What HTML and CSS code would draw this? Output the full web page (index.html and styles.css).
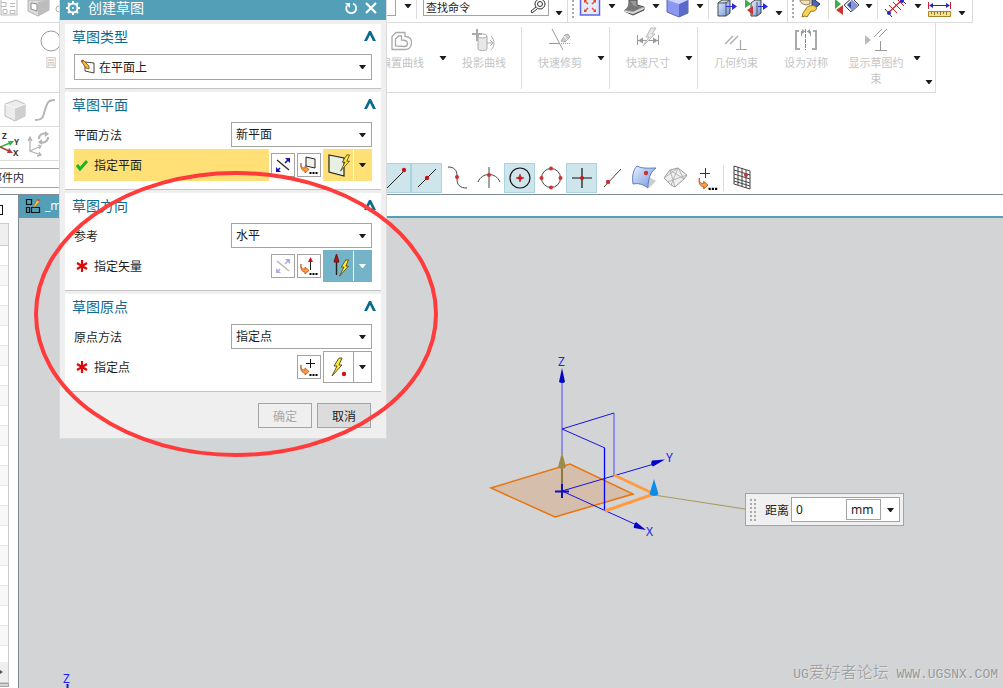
FILE: index.html
```html
<!DOCTYPE html>
<html lang="zh-CN">
<head>
    <meta charset="UTF-8">
    <meta name="viewport" content="width=device-width, initial-scale=1.0">
    <title>创建草图</title>
    <link rel="stylesheet" href="styles.css">
</head>
<body>
    <svg class="defs">
        <linearGradient id="blue" x1="0" y1="0" x2="1" y2="1"><stop offset="0" stop-color="#e8f0ff"/><stop offset="1" stop-color="#6c93dc"/></linearGradient>
        <symbol id="drop" viewBox="0 0 7 4"><path d="M0 0h7L4 4H3z" fill="currentColor"/></symbol>
        <symbol id="chevron" viewBox="0 0 12 10"><path d="M0 10 5 0h2l5 10H9L6 4 3 10z" fill="#0a6a8a"/></symbol>
        <symbol id="bolt" viewBox="0 0 12 20"><path d="M8 1 3 9h3L1 19 11 8H8l3-7z" fill="#ffe92e" stroke="#4c4420" stroke-width=".9"/></symbol>
        <symbol id="hook" viewBox="0 0 18 12"><path d="M1 1c0 4 1 5 4 5V4l4 3.500L5 11V9C2 9 0 6 1 1z" fill="#ff9c3c" stroke="#b8501c" stroke-width=".8"/><path d="M9.500 10h2v2h-2zM12.500 10h2v2h-2zM15.500 10h2v2h-2z" fill="#000"/></symbol>
        <symbol id="star" viewBox="0 0 12 12"><path d="M6 0v12M1 3l10 6M11 3 1 9" stroke="#dc0808" stroke-width="2.200"/></symbol>
        <symbol id="flip" viewBox="0 0 18 18"><path d="M3 4l12 10" stroke="#222" stroke-width="1.200"/><path d="M11 7l4-4M6 12l-3 3" stroke="#1414b4" stroke-width="1.600"/><path d="M16 2v5l-5-5zM2 16v-5l5 5z" fill="#1414b4"/></symbol>
    </svg>

    <header class="topbar">
        <div class="left-tools">
            <svg class="icon" viewBox="0 0 24 22"><path d="M1 0v15h16V0M1 2.500h5v4H1M3 9.500h4v4H3zM10 3.500h5M10 6.500h5M10 10.500h5v3h-5z" fill="none" stroke="#b8b8b8"/></svg>
            <svg class="icon" viewBox="0 0 24 22"><path d="M1 0v11l10 5 11-6V0z" fill="#dcdcdc" stroke="#b0b0b0"/><path d="M11 2v14l11-6V0z" fill="#bdbdbd"/><path d="M4 3l6 1v7l-6-2z" fill="#fff" stroke="#888"/></svg>
            <svg class="icon" viewBox="0 0 24 22"><circle cx="5" cy="9" r="3" fill="none" stroke="#aaa"/></svg>
        </div>
        <div class="box-end"></div>
        <svg class="arrow"><use href="#drop"/></svg>
        <span class="sep"></span>
        <label class="search">
            <input type="text" value="查找命令" aria-label="查找命令">
            <svg viewBox="0 0 16 14"><circle cx="10" cy="4" r="5" fill="none" stroke="#333"/><circle cx="10" cy="4" r="2.500" fill="none" stroke="#333"/><path d="M6 7l-5 4 1 2 5-4" fill="#fff" stroke="#333"/></svg>
        </label>
        <svg class="arrow low"><use href="#drop"/></svg>
        <span class="sep edge"></span>
        <span class="grip"></span>
        <svg class="icon" viewBox="0 0 24 22"><path d="M2.500-2v17h19V-2z" fill="#e4eafc" stroke="#5a64e6" stroke-width="1.500"/><path d="M10 4 7 1M14 4l3-3M10 8l-3 3M14 8l3 3" stroke="#e84820" stroke-width="1.400"/><path d="M6 0h3L6 3zM18 0h-3l3 3zM6 12h3L6 9zM18 12h-3l3-3z" fill="#e84820"/></svg>
        <svg class="arrow"><use href="#drop"/></svg>
        <svg class="icon" viewBox="0 0 24 22"><path d="M7 0v7l-5 4 9 4 11-5v-3l-7-2V0z" fill="#999" stroke="#444"/><path d="M2 11l9 2 11-5" fill="none" stroke="#ddd" stroke-width="1.500"/><path d="M8 1l4 5 8 1-8 4-8-1z" fill="#777"/></svg>
        <svg class="arrow"><use href="#drop"/></svg>
        <svg class="icon" viewBox="0 0 24 22"><path d="M1 0v12l12 5 9-4V0z" fill="#8c98f0" stroke="#5a66bc"/><path d="M13 4v13l9-4V0z" fill="#5a6ac8"/><path d="M1 0h21l-9 4z" fill="#cdd3ff"/></svg>
        <svg class="arrow"><use href="#drop"/></svg>
        <span class="sep"></span>
        <svg class="icon" viewBox="0 0 24 22"><path d="M3 3l4-3h8v13l-4 3H3z" fill="url(#blue)" stroke="#444"/><path d="M11 2v14M3 3h8l4-3" fill="none" stroke="#555"/><path d="M11 6.500h8" stroke="#2a2ad8"/><path d="M17 3l5 3.500-5 3.500z" fill="#2a2ad8"/></svg>
        <svg class="icon spaced" viewBox="0 0 24 22"><path d="M6 3l4-3h6v13l-4 3H6z" fill="url(#blue)" stroke="#444"/><path d="M12 2v14" stroke="#555"/><path d="M13 6.500h7" stroke="#2a2ad8"/><path d="M18 3l5 3.500-5 3.500z" fill="#2a2ad8"/><path d="M0-1l6 5-6 4z" fill="#38b048"/><path d="M8 6v9l-6-5z" fill="#c43a32"/></svg>
        <svg class="arrow low"><use href="#drop"/></svg>
        <span class="sep edge"></span>
        <span class="grip"></span>
        <svg class="icon" viewBox="0 0 24 22"><path d="M14-2l8 6-8 7z" fill="#4a66b8" stroke="#333"/><path d="M2 0c0 4 6 6 10 4V0z" fill="#f3dfb2" stroke="#8c7850"/><path d="M8 9c0-3 8-5 10-2 2 3-3 5-5 4l-4 6-2-1-3 1 1-4z" fill="#f6d255" stroke="#94721c"/></svg>
        <span class="sep mid"></span>
        <svg class="icon" viewBox="0 0 24 22"><path d="M0-1l6 5-6 5z" fill="#38b048"/><path d="M8 5v10l-7-5z" fill="#c43a32"/><path d="M9 5l8-7 7 7-8 7z" fill="#eef" stroke="#444"/><path d="M16-1v13l7-7z" fill="#8a94d8"/><path d="M12 5l4-4v8z" fill="#3c50a0"/></svg>
        <svg class="arrow"><use href="#drop"/></svg>
        <span class="sep"></span>
        <svg class="icon" viewBox="0 0 24 22"><path d="M4 13 18 0" stroke="#d02020" stroke-width="1.200"/><path d="M5 5l8 8M9 2l8 8M13-1l7 7" stroke="#d02020"/><path d="M1 9l7 8M16-2l6 6" stroke="#333"/><circle cx="5" cy="13" r="2" fill="#2828d0"/><circle cx="18" cy="1" r="2" fill="#2828d0"/></svg>
        <svg class="arrow"><use href="#drop"/></svg>
        <svg class="icon" viewBox="0 0 24 22"><path d="M.5 2v7M22.500 2v7" stroke="#c41e3a"/><path d="M2 5.500h19" stroke="#2828b0"/><path d="M1 5.500l4-2.500v5zM22 5.500l-4-2.500v5z" fill="#2828b0"/><path d="M.5 11.500h22v5H.5z" fill="#f8e38a" stroke="#a88428"/><path d="M3.500 12v2M6.500 12v3M9.500 12v2M12.500 12v3M15.500 12v2M18.500 12v3" stroke="#8b7538"/></svg>
        <svg class="arrow low"><use href="#drop"/></svg>
    </header>

    <section class="ribbon">
        <div class="ribbon-left">
            <button class="tool">
                <svg viewBox="0 0 28 28"><circle cx="14" cy="14" r="10" fill="none" stroke="#999"/></svg>
                圆
            </button>
        </div>
        <div class="group">
            <button class="tool">
                <svg viewBox="0 0 28 28"><path d="M4 22.500V9.500l4-4h9v4c5 0 7 3 6.500 7s-3 6-6 6z" fill="none" stroke="#aaa" stroke-width="1.300"/><path d="M7.500 19v-7l3-3h3v4c4 0 6 1 6 3.500s-1 3-3 3z" fill="none" stroke="#aaa" stroke-width="1.300"/></svg>
                偏置曲线
            </button>
            <svg class="arrow"><use href="#drop"/></svg>
            <button class="tool">
                <svg viewBox="0 0 28 28"><path d="M7 2v12M2 7h10" stroke="#aaa" stroke-width="2"/><path d="M8 9v13c0 2 9 2 9 0V9z" fill="#e8e8e8" stroke="#aaa"/><ellipse cx="12.500" cy="9" rx="4.500" ry="2" fill="#fff" stroke="#aaa"/><path d="M17 16h5M20 13l3 3-3 3M21 9c4 4 4 10 0 14" fill="none" stroke="#aaa"/></svg>
                投影曲线
            </button>
        </div>
        <div class="group">
            <button class="tool">
                <svg viewBox="0 0 28 28"><path d="M6 2l11 21M3 16.500h10" stroke="#999"/><path d="M13 16.500h12" stroke="#999" stroke-dasharray="1 1"/><path d="M15 14l4-6 3-1 2 3-5 5z" fill="#ccc" stroke="#aaa"/><path d="M18 9l3 4" stroke="#fff"/></svg>
                快速修剪
            </button>
            <svg class="arrow"><use href="#drop"/></svg>
        </div>
        <div class="group">
            <button class="tool">
                <svg viewBox="0 0 28 28"><path d="M3.500 8v10M24.500 8v10M4 13.500h20" stroke="#999"/><path d="M4 13.500l5-3v6zM24 13.500l-5-3v6z" fill="#999"/><path d="M17 1l-5 9h3L9 19 21 7h-3l4-6z" fill="#e6e6e6" stroke="#bbb"/></svg>
                快速尺寸
            </button>
            <svg class="arrow"><use href="#drop"/></svg>
        </div>
        <div class="group last">
            <button class="tool">
                <svg viewBox="0 0 28 28"><path d="M3 17l8-8M8 17l8-8M18.500 13v9M14 22.500h11" fill="none" stroke="#aaa" stroke-width="1.200"/></svg>
                几何约束
            </button>
            <button class="tool">
                <svg viewBox="0 0 28 28"><path d="M7 4H4v18h4M21 4h3v18h-4" fill="none" stroke="#aaa" stroke-width="2"/><path d="M13.500 2v21" stroke="#888" stroke-dasharray="4 1"/><path d="M9.500 9V4.500h3M18.500 9V4.500h-3" fill="none" stroke="#999"/><path d="M10 2l3 2.500-3 2.500M18 2l-3 2.500 3 2.500" fill="#999"/></svg>
                设为对称
            </button>
            <button class="tool">
                <svg viewBox="0 0 28 28"><path d="M3 8v10l6-5z" fill="#bbb"/><path d="M12 10l8-8M17 10l8-8M18.500 14v9M13 23.500h12" fill="none" stroke="#999"/></svg>
                显示草图约束
            </button>
            <svg class="arrow"><use href="#drop"/></svg>
        </div>
        <svg class="arrow overflow"><use href="#drop"/></svg>
    </section>

    <div class="side-bar">
        <svg viewBox="0 0 24 24"><path d="M2 6l11-4 9 4v12l-10 5-10-5z" fill="#ececec" stroke="#bbb"/><path d="M12 10v13l10-5V6z" fill="#cfcfcf"/><path d="M2 6l10 4 10-4" fill="none" stroke="#fafafa"/></svg>
        <svg viewBox="0 0 24 24"><path d="M2 22c9 0 8-4 10-10S14 2 22 2" fill="none" stroke="#b4b4b4" stroke-width="2"/></svg>
    </div>
    <div class="side-bar csys">
        <svg viewBox="0 0 24 28"><path d="M0 17l10-4" stroke="#38b048" stroke-width="1.500"/><path d="M8 11h6l-4 5z" fill="#38b048"/><path d="M0 17l9 4" stroke="#b83a3a" stroke-width="1.500"/><path d="M13 23H7l2-5z" fill="#b83a3a"/><text x="2" y="9" class="axis-small">Z</text><text x="14" y="15" class="axis-small">Y</text><text x="13" y="26" class="axis-small">X</text></svg>
        <svg viewBox="0 0 24 28"><path d="M3 8v13l11 4M3 21l11-5M1 11l2-4 2 4M11 15l3 1-2 3M10 26l4-1-2-3" fill="none" stroke="#b4b4b4" stroke-width="1.300"/><path d="M12 9a5 5 0 0 1 7-5M21 7a5 5 0 0 1-7 5" fill="none" stroke="#b4b4b4" stroke-width="2"/><path d="M18 1l4 3-4 3zM15 9v6l-4-3z" fill="#b4b4b4"/></svg>
    </div>

    <div class="snapbar">
        <div class="snap-left">
            <select class="scope" aria-label="选择范围"><option>部件内</option></select>
        </div>
        <button class="snap on" aria-label="端点"><svg viewBox="0 0 28 28"><path d="M5 24 21 8" stroke="#222"/><circle cx="22" cy="6" r="2.200" fill="#d01414"/></svg></button>
        <button class="snap on" aria-label="中点"><svg viewBox="0 0 28 28"><path d="M5 23 23 5" stroke="#222"/><circle cx="14" cy="14" r="2.200" fill="#d01414"/></svg></button>
        <button class="snap" aria-label="控制点"><svg viewBox="0 0 28 28"><path d="M4 3c6 0 9 3 9 9v3c0 6 3 9 10 9" fill="none" stroke="#444"/><circle cx="13" cy="13" r="2" fill="#d03030"/></svg></button>
        <button class="snap" aria-label="交点"><svg viewBox="0 0 28 28"><path d="M14 3v21M3 18c4-10 18-10 22 0" fill="none" stroke="#444"/><circle cx="14" cy="11" r="2" fill="#d03030"/></svg></button>
        <button class="snap on" aria-label="圆弧中心"><svg viewBox="0 0 28 28"><circle cx="14" cy="14" r="10" fill="none" stroke="#111" stroke-width="1.200"/><path d="M14 10l1 3 3 1-3 1-1 3-1-3-3-1 3-1z" fill="#d01414" stroke="#d01414" stroke-width=".6"/></svg></button>
        <button class="snap" aria-label="象限点"><svg viewBox="0 0 28 28"><circle cx="14" cy="14" r="9.500" fill="none" stroke="#444"/><g fill="#d03030"><circle cx="14" cy="4.500" r="2"/><circle cx="14" cy="23.500" r="2"/><circle cx="4.500" cy="14" r="2"/><circle cx="23.500" cy="14" r="2"/></g></svg></button>
        <button class="snap on" aria-label="现有点"><svg viewBox="0 0 28 28"><path d="M14 4v20M4 14h20" stroke="#111" stroke-width="1.200"/><circle cx="14" cy="14" r="2" fill="#d01414"/></svg></button>
        <button class="snap" aria-label="曲线上的点"><svg viewBox="0 0 28 28"><path d="M5 23 22 5" stroke="#444"/><circle cx="9" cy="18" r="2.200" fill="#d03030"/></svg></button>
        <button class="snap" aria-label="面上的点"><svg viewBox="0 0 28 28"><path d="M17 12l9 5-7 7z" fill="#ccc"/><path d="M7 2c6 3 12 2 19 2-6 4-8 12-8 20-5-4-10-5-15-4C2 12 3 6 7 2z" fill="url(#blue)" stroke="#5c7cc4"/><circle cx="16" cy="9" r="2.200" fill="#d03030"/></svg></button>
        <button class="snap" aria-label="小平面顶点"><svg viewBox="0 0 28 28"><path d="M3 14 9 6l8-2 9 7-3 4-9 8-4-2z" fill="#eee" stroke="#999"/><path d="M9 6l5 17M3 14l14-10 6 11-14-9M6 18l20-7M17 4l-7 17" stroke="#aaa" fill="none" stroke-width=".8"/></svg></button>
        <button class="snap" aria-label="点构造器"><svg viewBox="0 0 28 28"><path d="M13.500 4v10M8 9.500h10" stroke="#333"/><use href="#hook" x="5" y="13" width="22" height="13"/></svg></button>
        <span class="sep"></span>
        <button class="snap" aria-label="捕捉网格"><svg viewBox="0 0 28 28"><path d="M6 2l16 5v18L6 20zM10 3v18M14 4v19M18 6v18M6 6l16 5M6 10l16 5M6 14l16 5M6 17l16 5" fill="none" stroke="#444"/><circle cx="18" cy="11" r="2" fill="#d03030"/></svg></button>
    </div>

    <main class="work">
        <aside class="navigator">
            <div class="pin"></div>
            <div class="rows">
                <div class="head"></div>
                <div class="stripes"></div>
                <div class="foot"><svg viewBox="0 0 4 6"><path d="M0 1l3 2-3 2z" fill="#555"/></svg></div>
            </div>
            <div class="scroll"></div>
        </aside>
        <div class="document">
            <nav class="tabs">
                <a href="#canvas" class="tab">
                    <svg viewBox="0 0 16 16"><path d="M1.500 1.500h5v5h-5zM1.500 9.500h3v5h-3zM6.500 9.500h8v5h-8z" fill="none" stroke="#111" stroke-width="1.200"/><path d="M8 9l4-7 3 1-5 6z" fill="#f5c542" stroke="#9a6a10" stroke-width=".6"/><path d="M12 2l1-1 2 1-1 1z" fill="#d63838"/></svg>
                    _model1.prt
                </a>
            </nav>
            <div class="canvas" id="canvas">
                <!-- datum csys with the sketch plane preview -->
                <svg class="scene" viewBox="19 218 984 470">
                    <path d="M491 488l79-24 63 30-78 23z" fill="#d8a882" fill-opacity=".5" stroke="#e8740c" stroke-width="1.500"/>
                    <path d="M562 380v74" stroke="#8c8cf4" stroke-width="2"/>
                    <path d="M614 413v63" stroke="#8c8cf4" stroke-width="2"/>
                    <path d="M562 429l52-16M562 429l43 19M562 491l92-27M562 491l77 35" fill="none" stroke="#1414e0"/>
                    <path d="M604.500 448v62" stroke="#0000ff" stroke-width="1.300"/>
                    <path d="M614 475l40 19-49 17" fill="none" stroke="#ff9c40" stroke-width="3"/>
                    <path d="M654 495l91 14" stroke="#a89858"/>
                    <path d="M562 467v24" stroke="#8a7a3c" stroke-width="2"/>
                    <path d="M562 452l4 15q-4 4-8 0z" fill="#9c8c4c"/>
                    <path d="M555 491.500h14M562 484v14" stroke="#1010c0" stroke-width="2"/>
                    <path d="M562 368l3 14q-3 2-6 0z" fill="#0404c8"/>
                    <path d="M665 459.500l-13 1q-2 4 1 6zM646 530l-10-8q-3 3-2 6z" fill="#0404c8"/>
                    <path d="M654 479l4.500 15q-4.500 4-9 0z" fill="#0c8ce8"/>
                    <g class="axis"><text x="558" y="366">Z</text><text x="666" y="462">Y</text><text x="646" y="536">X</text><text x="63" y="683">Z</text></g>
                    <path d="M67.500 684v4" stroke="#1414c8" stroke-width="2"/>
                </svg>
                <div class="distance">
                    <span class="dots"></span>
                    <label for="dist">距离</label>
                    <div class="dist-box">
                        <input id="dist" type="text" value="0">
                        <select aria-label="单位"><option>mm</option></select>
                        <button aria-label="更多"><svg class="tri"><use href="#drop"/></svg></button>
                    </div>
                </div>
                <div class="watermark">UG<span>爱好者论坛</span> WWW.UGSNX.COM</div>
            </div>
        </div>
    </main>

    <form class="dialog">
        <div class="title">
            <svg viewBox="0 0 16 16"><circle cx="8" cy="8" r="4.500" fill="none" stroke="#fff" stroke-width="2"/><path d="M8 1v3M8 12v3M1 8h3M12 8h3M3 3l2 2M11 11l2 2M3 13l2-2M11 5l2-2" stroke="#fff" stroke-width="2"/><circle cx="8" cy="8" r="1" fill="#fff"/></svg>
            <h1>创建草图</h1>
            <button type="button" aria-label="重置"><svg viewBox="0 0 14 14"><path d="M9 2.500a5 5 0 1 1-6 2" fill="none" stroke="#fff" stroke-width="1.800"/><path d="M1 2h5v5z" fill="#fff"/></svg></button>
            <button type="button" aria-label="关闭"><svg viewBox="0 0 14 14"><path d="M2 2l10 10M12 2 2 12" stroke="#fff" stroke-width="2.200"/></svg></button>
        </div>
        <div class="panels">
            <section class="panel">
                <h2>草图类型 <svg><use href="#chevron"/></svg></h2>
                <div class="combo type">
                    <svg class="plane" viewBox="0 0 16 16"><path d="M5 3l9 1v10l-9-2z" fill="#fff" stroke="#444"/><path d="M1 2l2-1 6 6v3l-3-1z" fill="#f5bc32" stroke="#7c4c14" stroke-width=".8"/><path d="M1 2l2-1 1 1-2 1z" fill="#d03030"/></svg>
                    <select aria-label="草图类型"><option>在平面上</option></select>
                    <svg class="tri"><use href="#drop"/></svg>
                </div>
            </section>
            <section class="panel">
                <h2>草图平面 <svg><use href="#chevron"/></svg></h2>
                <div class="field">
                    <label for="plane">平面方法</label>
                    <div class="combo"><select id="plane"><option>新平面</option></select><svg class="tri"><use href="#drop"/></svg></div>
                </div>
                <div class="pick">
                    <div class="pick-label active"><svg viewBox="0 0 12 12"><path d="M1 6l3 4 7-8" fill="none" stroke="#1cb428" stroke-width="3"/></svg>指定平面</div>
                    <button type="button" class="mini" aria-label="反向"><svg viewBox="0 0 18 18"><use href="#flip"/></svg></button>
                    <button type="button" class="mini" aria-label="平面对话框"><svg viewBox="0 0 18 18"><path d="M6 1l9 2v9l-9-2z" fill="#eef2ea" stroke="#222"/><use href="#hook" y="6" width="18" height="12"/></svg></button>
                    <div class="split yellow">
                        <button type="button" aria-label="自动判断平面"><svg viewBox="0 0 26 26"><path d="M3 3l15 3v18L3 20z" fill="#e8f0e4" stroke="#222" stroke-width="1.200"/><use href="#bolt" x="13" y="2" width="12" height="18"/></svg></button>
                        <button type="button" aria-label="更多"><svg class="tri"><use href="#drop"/></svg></button>
                    </div>
                </div>
            </section>
            <section class="panel">
                <h2>草图方向 <svg><use href="#chevron"/></svg></h2>
                <div class="field">
                    <label for="ref">参考</label>
                    <div class="combo"><select id="ref"><option>水平</option></select><svg class="tri"><use href="#drop"/></svg></div>
                </div>
                <div class="pick">
                    <div class="pick-label"><svg><use href="#star"/></svg>指定矢量</div>
                    <button type="button" class="mini" aria-label="反向" disabled><svg viewBox="0 0 18 18"><use href="#flip"/></svg></button>
                    <button type="button" class="mini" aria-label="矢量对话框"><svg viewBox="0 0 18 18"><path d="M10.500 4v9" stroke="#222"/><path d="M10.500 0l2.500 5H8z" fill="#c81414"/><use href="#hook" y="6" width="18" height="12"/></svg></button>
                    <div class="split teal">
                        <button type="button" aria-label="自动判断矢量"><svg viewBox="0 0 26 26"><path d="M10.500 8v14" stroke="#222" stroke-width="1.400"/><path d="M10.500 1l2.500 8H8z" fill="#b41414" stroke="#701010"/><use href="#bolt" x="12" y="6" width="12" height="18"/></svg></button>
                        <button type="button" aria-label="更多"><svg class="tri"><use href="#drop"/></svg></button>
                    </div>
                </div>
            </section>
            <section class="panel">
                <h2>草图原点 <svg><use href="#chevron"/></svg></h2>
                <div class="field">
                    <label for="origin">原点方法</label>
                    <div class="combo"><select id="origin"><option>指定点</option></select><svg class="tri"><use href="#drop"/></svg></div>
                </div>
                <div class="pick">
                    <div class="pick-label"><svg><use href="#star"/></svg>指定点</div>
                    <button type="button" class="mini" aria-label="点对话框"><svg viewBox="0 0 18 18"><path d="M10.500 1v9M6 5.500h9" stroke="#111"/><use href="#hook" y="6" width="18" height="12"/></svg></button>
                    <div class="split">
                        <button type="button" aria-label="自动判断点"><svg viewBox="0 0 26 26"><use href="#bolt" x="4" y="3" width="14" height="20"/><circle cx="18" cy="20" r="2.200" fill="#d01414"/></svg></button>
                        <button type="button" aria-label="更多"><svg class="tri"><use href="#drop"/></svg></button>
                    </div>
                </div>
            </section>
        </div>
        <div class="actions">
            <button type="button" disabled>确定</button>
            <button type="button">取消</button>
        </div>
    </form>

    <svg class="marker" viewBox="0 0 406 288"><ellipse cx="203" cy="144" rx="200" ry="141" fill="none" stroke="#ff3b3b" stroke-width="4"/></svg>
</body>
</html>
```
FILE: styles.css
```css
:root {
    --teal: #549fb8;
    --heading: #0a6a8f;
    --line: #dcdcdc;
    --border: #a4a4a4;
    --canvas: #d3d4d6;
    --yellow: #ffe077;
}
* { box-sizing: border-box; }
body {
    margin: 0;
    height: 100vh;
    display: flex;
    flex-direction: column;
    position: relative;
    overflow: hidden;
    background: #fff;
    color: #1c1c1c;
    font-family: "Noto Sans", "Noto Sans CJK SC", sans-serif;
    font-size: 12px;
}
button, input, select {
    font: inherit;
    color: inherit;
    margin: 0;
    padding: 0;
    border: none;
    border-radius: 0;
    background: none;
    appearance: none;
    outline: none;
}
svg { display: block; flex: none; }
.defs { position: absolute; width: 0; height: 0; }
.tri { width: 7px; height: 4px; }

/* top toolbar */
.topbar {
    display: flex;
    flex: none;
    align-self: flex-start;
    height: 23px;
    border-right: 1px solid var(--line);
    border-bottom: 1px solid var(--line);
    overflow: hidden;
}
.left-tools {
    display: flex;
    gap: 3px;
    width: 387px;
}
.icon { width: 24px; height: 22px; }
.icon.spaced { margin-left: 6px; }
.box-end {
    width: 9px;
    height: 16px;
    margin-right: 2px;
    border-right: 1px solid var(--border);
    border-bottom: 1px solid var(--border);
}
.arrow {
    width: 12px;
    height: 4px;
    margin: 4px 4px 0;
}
.arrow.low { margin-top: 11px; }
.sep {
    width: 1px;
    height: 19px;
    margin: 0 6px 0 -2px;
    background: var(--line);
}
.sep.edge { height: 22px; margin-right: 0; }
.sep.mid { margin-left: 6px; }
.search {
    display: flex;
    width: 126px;
    height: 16px;
    border: 1px solid var(--border);
    border-top: none;
}
.search input {
    flex: 1;
    min-width: 0;
    padding-left: 2px;
    font-size: 11px;
    line-height: 12px;
}
.search svg { width: 16px; height: 14px; margin-right: 2px; }
.grip {
    width: 10px;
    height: 19px;
    border-left: 4px solid #fff;
    border-right: 4px solid #fff;
    background: repeating-linear-gradient(#aaa 0 2px, #fff 2px 4px);
}

/* ribbon */
.ribbon {
    display: flex;
    flex: none;
    align-self: flex-start;
    height: 70px;
    padding: 4px 0 3px;
    border-right: 1px solid var(--line);
    border-bottom: 1px solid var(--line);
}
.ribbon-left { width: 364px; padding-left: 16px; }
.group {
    display: flex;
    padding: 0 2px 0 3px;
    border-right: 1px solid var(--line);
}
.group.last { border: none; padding-right: 0; }
.tool {
    display: flex;
    flex-direction: column;
    align-items: center;
    width: 70px;
    padding: 0 7px;
    font-size: 11px;
    line-height: 16px;
    color: #c4c4c4;
}
.tool svg { width: 28px; height: 28px; }
.ribbon .arrow { margin: 29px 0 0; }
.ribbon .overflow { margin: 53px 0 0; }

.side-bar {
    display: flex;
    flex: none;
    align-items: center;
    gap: 6px;
    width: 360px;
    height: 34px;
    padding-left: 3px;
    border-bottom: 1px solid var(--line);
}
.side-bar svg { width: 24px; height: 24px; }
.side-bar.csys { padding-left: 0; gap: 3px; }
.side-bar.csys svg { height: 28px; }
.axis-small { font-size: 8px; font-weight: 700; fill: #333; }

/* snap bar */
.snapbar {
    display: flex;
    flex: none;
    align-items: center;
    height: 34px;
    border-bottom: 1px solid #7f8b96;
}
.snap-left { width: 380px; overflow: hidden; }
.scope {
    width: 300px;
    height: 20px;
    margin-left: -18px;
    padding-left: 8px;
    border: 1px solid var(--border);
    font-size: 11px;
}
.snap {
    display: grid;
    place-items: center;
    width: 31px;
    height: 30px;
    border: 1px solid transparent;
}
.snap.on { background: #cde5eb; border-color: #a9d3de; }
.snap svg { width: 28px; height: 28px; }
.snapbar .sep { height: 26px; margin: 0 2px; }

/* work area */
.work { display: flex; flex: 1; min-height: 0; }
.navigator {
    display: flex;
    flex-direction: column;
    width: 19px;
    border-right: 1px solid #7f8b96;
}
.pin {
    width: 3px;
    height: 10px;
    margin: 10px 0 8px;
    border: 1px solid #111;
    border-left: none;
}
.rows {
    display: flex;
    flex-direction: column;
    flex: 1;
    width: 9px;
    border: 1px solid #ccc;
    border-left: none;
}
.head { height: 22px; background: #efefef; border-bottom: 1px solid #ccc; }
.stripes {
    flex: 1;
    background: repeating-linear-gradient(#fff 0 19px, #e6e6e6 19px 20px, #f8f8f8 20px 39px, #e6e6e6 39px 40px);
}
.foot { display: flex; align-items: center; height: 20px; background: #efefef; }
.foot svg { width: 4px; height: 6px; }
.scroll { width: 9px; height: 4px; margin-bottom: 1px; background: #d4d4d4; border: 1px solid var(--border); border-left: none; }
.document { display: flex; flex-direction: column; flex: 1; min-width: 0; }
.tabs { display: flex; height: 23px; border-bottom: 2px solid var(--teal); }
.tab {
    display: flex;
    align-items: center;
    gap: 4px;
    padding: 0 6px;
    background: var(--teal);
    color: #fff;
    text-decoration: none;
}
.tab svg { width: 16px; height: 16px; }
.canvas { flex: 1; position: relative; overflow: hidden; background: var(--canvas); }
.scene { position: absolute; left: 0; top: 0; width: 984px; height: 470px; }
.axis { font-size: 12px; fill: #2020f0; }
.distance {
    position: absolute;
    left: 726px;
    top: 275px;
    display: flex;
    align-items: center;
    height: 33px;
    padding: 3px;
    border: 1px solid var(--border);
    background: #f0f0f0;
    white-space: nowrap;
}
.dots {
    width: 8px;
    height: 24px;
    margin-right: 8px;
    background: radial-gradient(#aaa 1px, transparent 1px) 0 0 / 4px 4px;
}
.dist-box {
    display: flex;
    align-items: center;
    height: 25px;
    margin-left: 2px;
    border: 1px solid var(--border);
    background: #fff;
}
.dist-box input { width: 54px; padding-left: 4px; }
.dist-box select { width: 35px; height: 21px; padding-left: 4px; border: 1px solid var(--border); }
.dist-box button { display: grid; place-items: center; width: 18px; height: 21px; }
.watermark {
    position: absolute;
    right: 5px;
    bottom: 1px;
    font-family: "Liberation Mono", monospace;
    font-size: 13px;
    line-height: 24px;
    color: #98999b;
    text-shadow: 1px 1px #e6e6e6;
    white-space: nowrap;
}
.watermark span { font-family: "Noto Sans CJK SC", sans-serif; font-size: 16px; font-weight: 300; }

/* sketch dialog */
.dialog {
    position: absolute;
    left: 59px;
    top: 0;
    width: 328px;
    border: 1px solid #dadada;
    border-top: none;
    background: #efefef;
}
.title {
    display: flex;
    align-items: center;
    height: 20px;
    padding: 0 8px 4px 5px;
    background: var(--teal);
    color: #fff;
}
.title svg { width: 16px; height: 16px; }
.title h1 { flex: 1; margin: 0 0 0 7px; font-size: 14px; font-weight: 400; line-height: 18px; }
.title button { margin-left: 6px; }
.title button svg { width: 14px; height: 14px; }
.panels { display: flex; flex-direction: column; gap: 3px; padding: 4px 5px 0; }
.panel {
    padding: 0 9px 8px;
    background: #fff;
    border-bottom: 1px solid #c4c4c4;
}
.panel h2 {
    display: flex;
    justify-content: space-between;
    align-items: center;
    height: 24px;
    margin: 0 -4px 6px -2px;
    color: var(--heading);
    font-size: 14px;
    font-weight: 400;
}
.panel h2 svg { width: 12px; height: 10px; }
.combo {
    display: grid;
    align-items: center;
    width: 141px;
    height: 25px;
    border: 1px solid var(--border);
}
.combo > * { grid-area: 1 / 1; }
.combo select { width: 100%; height: 100%; padding-left: 4px; }
.combo .tri { justify-self: end; margin-right: 5px; pointer-events: none; }
.combo.type { width: 100%; height: 26px; }
.combo.type select { padding-left: 24px; }
.combo .plane { width: 16px; height: 16px; margin-left: 5px; }
.field { display: flex; justify-content: space-between; align-items: center; margin-bottom: 2px; }
.pick { display: flex; align-items: center; gap: 2px; height: 32px; }
.pick-label {
    display: flex;
    flex: 1;
    align-items: center;
    gap: 6px;
    height: 32px;
    padding-left: 2px;
}
.pick-label svg { width: 12px; height: 12px; }
.pick-label.active { background: var(--yellow); }
.mini {
    display: grid;
    place-items: center;
    width: 24px;
    height: 24px;
    border: 1px solid var(--border);
    background: #fff;
}
.mini svg { width: 18px; height: 18px; }
.mini:disabled svg { opacity: 0.35; }
.split { display: flex; width: 49px; height: 32px; border: 1px solid var(--border); }
.split button { display: grid; place-items: center; width: 17px; }
.split button:first-child { flex: 1; border-right: 1px solid var(--border); }
.split button:first-child svg { width: 26px; height: 26px; }
.split.yellow { background: var(--yellow); border-color: var(--yellow); }
.split.teal { background: #74b3c8; border-color: #74b3c8; color: #fff; }
.split.yellow button:first-child, .split.teal button:first-child { border-color: #fff; }
.actions {
    display: flex;
    justify-content: flex-end;
    gap: 5px;
    padding: 11px 15px 10px;
}
.actions button {
    width: 54px;
    height: 25px;
    border: 1px solid var(--border);
    background: #dcdcdc;
}
.actions button:disabled { background: #efefef; color: #a8a8a8; }

.marker {
    position: absolute;
    left: 33px;
    top: 170px;
    width: 406px;
    height: 288px;
    pointer-events: none;
}
```
